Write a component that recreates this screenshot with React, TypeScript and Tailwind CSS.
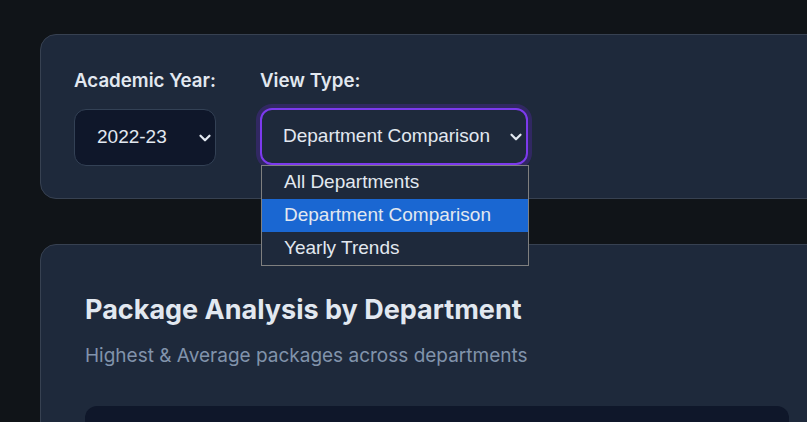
import { ChevronDown } from "lucide-react";

const options = ["All Departments", "Department Comparison", "Yearly Trends"];

const App = () => {
	return (
		<div className="w-[807px] h-[422px] overflow-hidden bg-[#101418] font-['Inter',sans-serif] text-[#e2e8f0]">
			<div className="pt-[34px] pl-[40px] w-[880px]">
				<div className="w-[794px] rounded-2xl border border-[#374151] bg-[#1e293b] px-[33px] pt-[33px] pb-[32px]">
					<div className="flex gap-[44px]">
						<div>
							<label className="block text-[18.7px] font-semibold mb-[15px] leading-[26px]">Academic Year:</label>
							<div className="flex items-center justify-between w-[142px] h-[57px] rounded-xl border border-[#334155] bg-[#0f172a] pl-[22px] pr-[1px] font-['Liberation_Sans',sans-serif] text-[19px]">
								<span>2022-23</span>
								<ChevronDown size={18} strokeWidth={3} />
							</div>
						</div>
						<div className="relative">
							<label className="block text-[18.7px] font-semibold mb-[14px] leading-[26px]">View Type:</label>
							<div className="flex items-center justify-between w-[268px] h-[57px] rounded-xl border-2 border-[#7c3aed] bg-[#1e293b] ring-4 ring-[#6d28d9]/25 pl-[21px] pr-[1px] font-['Liberation_Sans',sans-serif] text-[19px]">
								<span>Department Comparison</span>
								<ChevronDown size={18} strokeWidth={3} />
							</div>
							<ul className="absolute left-[1px] top-[97px] w-[268px] border border-[#7f7f7f] bg-[#1e293b] font-['Liberation_Sans',sans-serif] text-[19px] z-10">
								{options.map((o, i) => (
									<li key={o} className={`h-[33px] flex items-center pl-[22px] ${i === 1 ? "bg-[#1a67d2]" : ""}`}>{o}</li>
								))}
							</ul>
						</div>
					</div>
				</div>

				<div className="mt-[45px] w-[794px] h-[300px] rounded-2xl border border-[#374151] bg-[#1e293b] px-[44px] pt-[47px]">
					<h2 className="text-[27px] font-bold leading-[36px]">Package Analysis by Department</h2>
					<p className="mt-[14px] text-[19px] text-[#8193ab] leading-[28px]">Highest &amp; Average packages across departments</p>
					<div className="mt-[36px] h-[100px] rounded-xl bg-[#0f172a]"></div>
				</div>
			</div>
		</div>
	)
}

export default App
